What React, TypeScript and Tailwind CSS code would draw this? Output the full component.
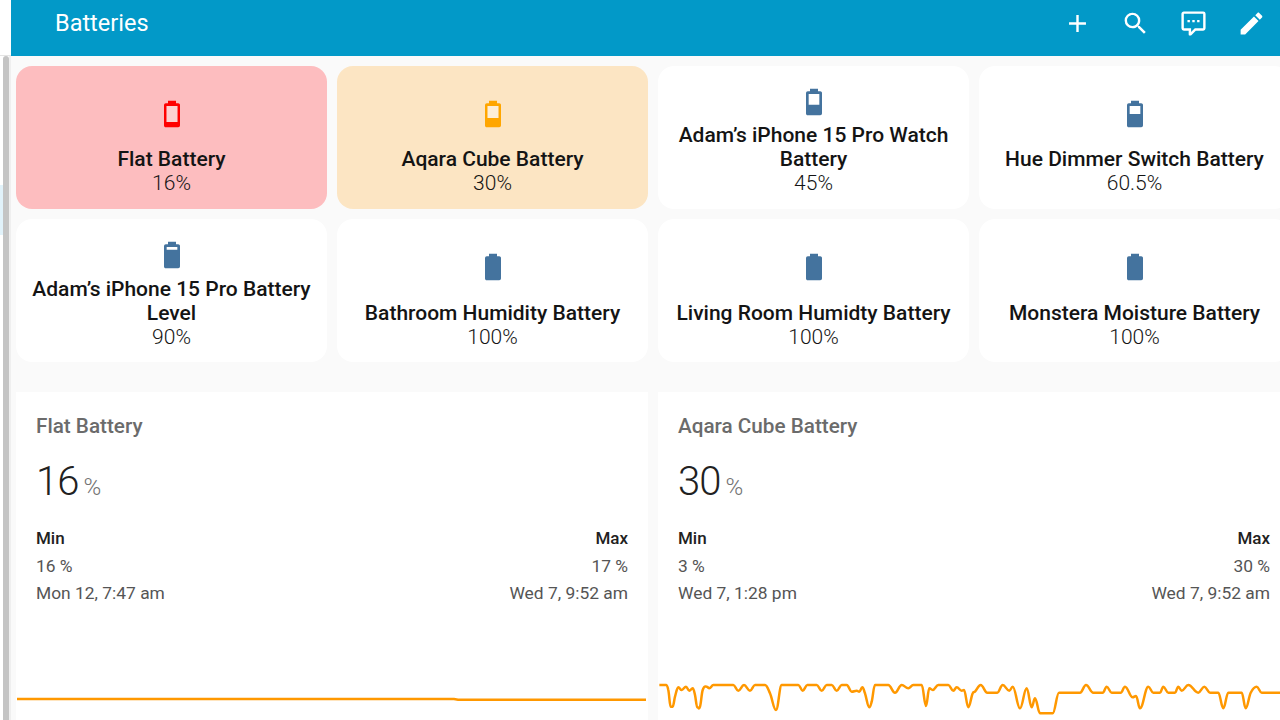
import React from 'react';

const batteryBody = 'M16.67,4H15V2H9V4H7.33A1.33,1.33 0 0,0 6,5.33V20.67C6,21.4 6.6,22 7.33,22H16.67A1.33,1.33 0 0,0 18,20.67V5.33C18,4.6 17.4,4 16.67,4Z';

const BatteryIcon: React.FC<{ hollowTo?: number; className: string; hollowClass?: string }> = ({ hollowTo, className, hollowClass }) => (
  <svg viewBox="0 0 24 24" className={`w-8 h-8 fill-current ${className}`}>
    <path d={hollowTo ? `M16,${hollowTo}H8V6H16V${hollowTo}Z ${batteryBody}` : batteryBody} fillRule="evenodd" />
    {hollowTo && hollowClass ? <rect x="8" y="6" width="8" height={hollowTo - 6} className={hollowClass} /> : null}
  </svg>
);

const HeaderIcon: React.FC<{ d: string }> = ({ d }) => (
  <svg viewBox="0 0 24 24" className="w-[29px] h-[29px] fill-white">
    <path d={d} />
  </svg>
);

const tiles = [
  { name: 'Flat Battery', value: '16%', bg: 'bg-[#fdbdbf]', iconColor: 'text-[#ff0000]', hollowTo: 18, hollowClass: 'fill-[#fcd0d0]', pad: 'pb-[14px] pt-[15px]' },
  { name: 'Aqara Cube Battery', value: '30%', bg: 'bg-[#fce5c3]', iconColor: 'text-[#ffa600]', hollowTo: 15, hollowClass: 'fill-[#fdeed8]', pad: 'pb-[14px] pt-[15px]' },
  { name: 'Adam’s iPhone 15 Pro Watch Battery', value: '45%', bg: 'bg-white', iconColor: 'text-[#44739e]', hollowTo: 14, pad: 'pb-[14px] pt-[15px]' },
  { name: 'Hue Dimmer Switch Battery', value: '60.5%', bg: 'bg-white', iconColor: 'text-[#44739e]', hollowTo: 12, pad: 'pb-[14px] pt-[15px]' },
  { name: 'Adam’s iPhone 15 Pro Battery Level', value: '90%', bg: 'bg-white', iconColor: 'text-[#44739e]', hollowTo: 8, pad: 'pb-[13px] pt-[14px]' },
  { name: 'Bathroom Humidity Battery', value: '100%', bg: 'bg-white', iconColor: 'text-[#44739e]', pad: 'pb-[13px] pt-[14px]' },
  { name: 'Living Room Humidty Battery', value: '100%', bg: 'bg-white', iconColor: 'text-[#44739e]', pad: 'pb-[13px] pt-[14px]' },
  { name: 'Monstera Moisture Battery', value: '100%', bg: 'bg-white', iconColor: 'text-[#44739e]', pad: 'pb-[13px] pt-[14px]' },
];

// points read off the graph: [x, y] in screen pixels / 3 from the line's own crop
const cubeA: number[][] = [[28,45],[48,45],[55,60],[62,110],[68,110],[75,80],[85,52],[95,60],[108,50],[118,62],[128,55],[135,75],[142,112],[150,110],[158,60],[170,50],[178,55],[190,45],[250,45],[265,62],[282,45],[300,62],[315,45],[345,45],[360,70],[378,120],[395,45],[445,45],[458,62],[472,45],[500,45],[515,62],[530,45],[545,45],[560,62],[575,45],[590,45],[605,65],[620,62],[628,65],[637,52],[645,70],[658,112],[665,95],[675,45],[715,45],[735,68],[755,45],[775,55],[790,45],[815,45],[828,108],[838,55],[848,60],[865,45],[895,45],[910,62],[920,52],[935,62]];
const cubeB: number[][] = [[12,60],[25,112],[38,70],[45,65],[62,45],[82,68],[112,68],[128,45],[148,62],[158,50],[180,115],[200,55],[215,112],[225,85],[240,130],[278,130],[297,68],[360,68],[378,45],[400,68],[428,68],[440,50],[455,68],[482,68],[495,50],[518,82],[528,78],[540,115],[565,50],[580,68],[600,68],[610,50],[625,68],[645,68],[655,50],[665,62],[685,45],[715,68],[733,50],[750,68],[775,68],[790,115],[805,68],[845,68],[857,115],[872,68],[890,50],[905,68],[960,68]];

const cubePoints = [
  ...cubeA.map(([x, y]) => [650 + x / 3 - 658, y / 3]),
  ...cubeB.map(([x, y]) => [960 + x / 3 - 658, y / 3]),
];

// monotone curve, so the line never overshoots its flat stretches
const smooth = (pts: number[][]) => {
  const slope = (i: number) => {
    if (i === 0 || i === pts.length - 1) return 0;
    const before = pts[i][1] - pts[i - 1][1];
    const after = pts[i + 1][1] - pts[i][1];
    if (before * after <= 0) return 0;
    return (pts[i + 1][1] - pts[i - 1][1]) / (pts[i + 1][0] - pts[i - 1][0]);
  };
  let d = `M${pts[0][0]},${pts[0][1]}`;
  for (let i = 0; i < pts.length - 1; i++) {
    const [x1, y1] = pts[i];
    const [x2, y2] = pts[i + 1];
    const dx = (x2 - x1) / 2.5;
    d += ` C${(x1 + dx).toFixed(1)},${(y1 + slope(i) * dx).toFixed(1)} ${(x2 - dx).toFixed(1)},${(y2 - slope(i + 1) * dx).toFixed(1)} ${x2.toFixed(1)},${y2.toFixed(1)}`;
  }
  return d;
};

const flatPath = 'M1,29 H438 L442,29.8 H630';

const charts = [
  { title: 'Flat Battery', value: '16', min: '16 %', max: '17 %', minAt: 'Mon 12, 7:47 am', maxAt: 'Wed 7, 9:52 am', path: flatPath },
  { title: 'Aqara Cube Battery', value: '30', min: '3 %', max: '30 %', minAt: 'Wed 7, 1:28 pm', maxAt: 'Wed 7, 9:52 am', path: smooth(cubePoints) },
];

const App: React.FC = () => {
  return (
    <div className="flex h-screen w-[1280px] overflow-hidden bg-white font-['Roboto',sans-serif]">
      {/* collapsed sidebar edge */}
      <div className="relative w-[11px] shrink-0 bg-white">
        <div className="mt-[55px] h-px bg-[#e4e4e4]" />
        <div className="mt-[129px] h-[50px] w-[3px] bg-[#e1f2fa]" />
        <div className="absolute left-[3px] top-[56px] bottom-0 w-[6px] rounded-t-sm bg-[#c4c4c4]" />
        <div className="absolute left-[9px] top-[56px] bottom-0 w-[2px] bg-[#efefef]" />
      </div>

      <div className="flex min-w-0 flex-1 flex-col">
        <header className="flex h-14 shrink-0 items-center bg-[#0299c8] pl-11 pr-[14px] text-white">
          <h1 className="-mt-[9px] flex-1 text-[23.5px] font-normal leading-none">Batteries</h1>
          <div className="-mt-[10px] flex items-center gap-[29px]">
            <HeaderIcon d="M19,13H13V19H11V13H5V11H11V5H13V11H19V13Z" />
            <HeaderIcon d="M9.5,3A6.5,6.5 0 0,1 16,9.5C16,11.11 15.41,12.59 14.44,13.73L14.71,14H15.5L20.5,19L19,20.5L14,15.5V14.71L13.73,14.44C12.59,15.41 11.11,16 9.5,16A6.5,6.5 0 0,1 3,9.5A6.5,6.5 0 0,1 9.5,3M9.5,5C7,5 5,7 5,9.5C5,12 7,14 9.5,14C12,14 14,12 14,9.5C14,7 12,5 9.5,5Z" />
            <HeaderIcon d="M9,22A1,1 0 0,1 8,21V18H4A2,2 0 0,1 2,16V4C2,2.89 2.9,2 4,2H20A2,2 0 0,1 22,4V16A2,2 0 0,1 20,18H13.9L10.2,21.71C10,21.9 9.75,22 9.5,22V22H9M10,16V19.08L13.08,16H20V4H4V16H10M17,11V9H15V11H17M13,11V9H11V11H13M9,11V9H7V11H9Z" />
            <HeaderIcon d="M20.71,7.04C21.1,6.65 21.1,6 20.71,5.63L18.37,3.29C18,2.9 17.35,2.9 16.96,3.29L15.12,5.12L18.87,8.87M3,17.25V21H6.75L17.81,9.93L14.06,6.18L3,17.25Z" />
          </div>
        </header>

        <main className="min-h-0 flex-1 overflow-hidden bg-[#fafafa] pl-[5px] pt-[10px]">
          <div className="grid w-[1274px] grid-cols-[repeat(4,311px)] gap-[10px]">
            {tiles.map((tile) => (
              <div key={tile.name} className={`flex h-[143px] flex-col items-center rounded-2xl text-center ${tile.pad} ${tile.bg}`}>
                <div className="flex min-h-0 flex-1 items-center justify-center">
                  <BatteryIcon hollowTo={tile.hollowTo} className={tile.iconColor} hollowClass={tile.hollowClass} />
                </div>
                <div className="w-full px-4 text-[21px] font-medium leading-6 text-[#141414]">{tile.name}</div>
                <div className="text-[21px] font-light leading-6 text-[#141414]">{tile.value}</div>
              </div>
            ))}
          </div>

          <div className="mt-[30px] grid w-[1274px] grid-cols-[repeat(2,632px)] gap-[10px]">
            {charts.map((chart) => (
              <section key={chart.title} className="h-[400px] bg-white">
                <div className="px-5 pt-[22px]">
                  <h2 className="text-[20.7px] font-medium leading-6 text-[#6b6b6b]">{chart.title}</h2>
                  <div className="mt-[20px] flex items-baseline font-light text-[#212121]">
                    <span className="text-[40px] leading-[48px] tracking-[-1px]">{chart.value}</span>
                    <span className="ml-[5px] text-[24px] leading-none text-[#727272]">%</span>
                  </div>
                  <div className="mt-[19px] flex justify-between text-[17.4px] leading-[27.5px] text-[#555]">
                    <div>
                      <div className="text-[17px] font-medium text-[#212121]">Min</div>
                      <div>{chart.min}</div>
                      <div>{chart.minAt}</div>
                    </div>
                    <div className="text-right">
                      <div className="text-[17px] font-medium text-[#212121]">Max</div>
                      <div>{chart.max}</div>
                      <div>{chart.maxAt}</div>
                    </div>
                  </div>
                </div>
                <svg viewBox="0 0 632 60" className="mt-[62px] block h-[60px] w-[632px] fill-none stroke-[#ff9800] stroke-[2.5]">
                  <path d={chart.path} />
                </svg>
              </section>
            ))}
          </div>
        </main>
      </div>
    </div>
  );
};

export default App;
